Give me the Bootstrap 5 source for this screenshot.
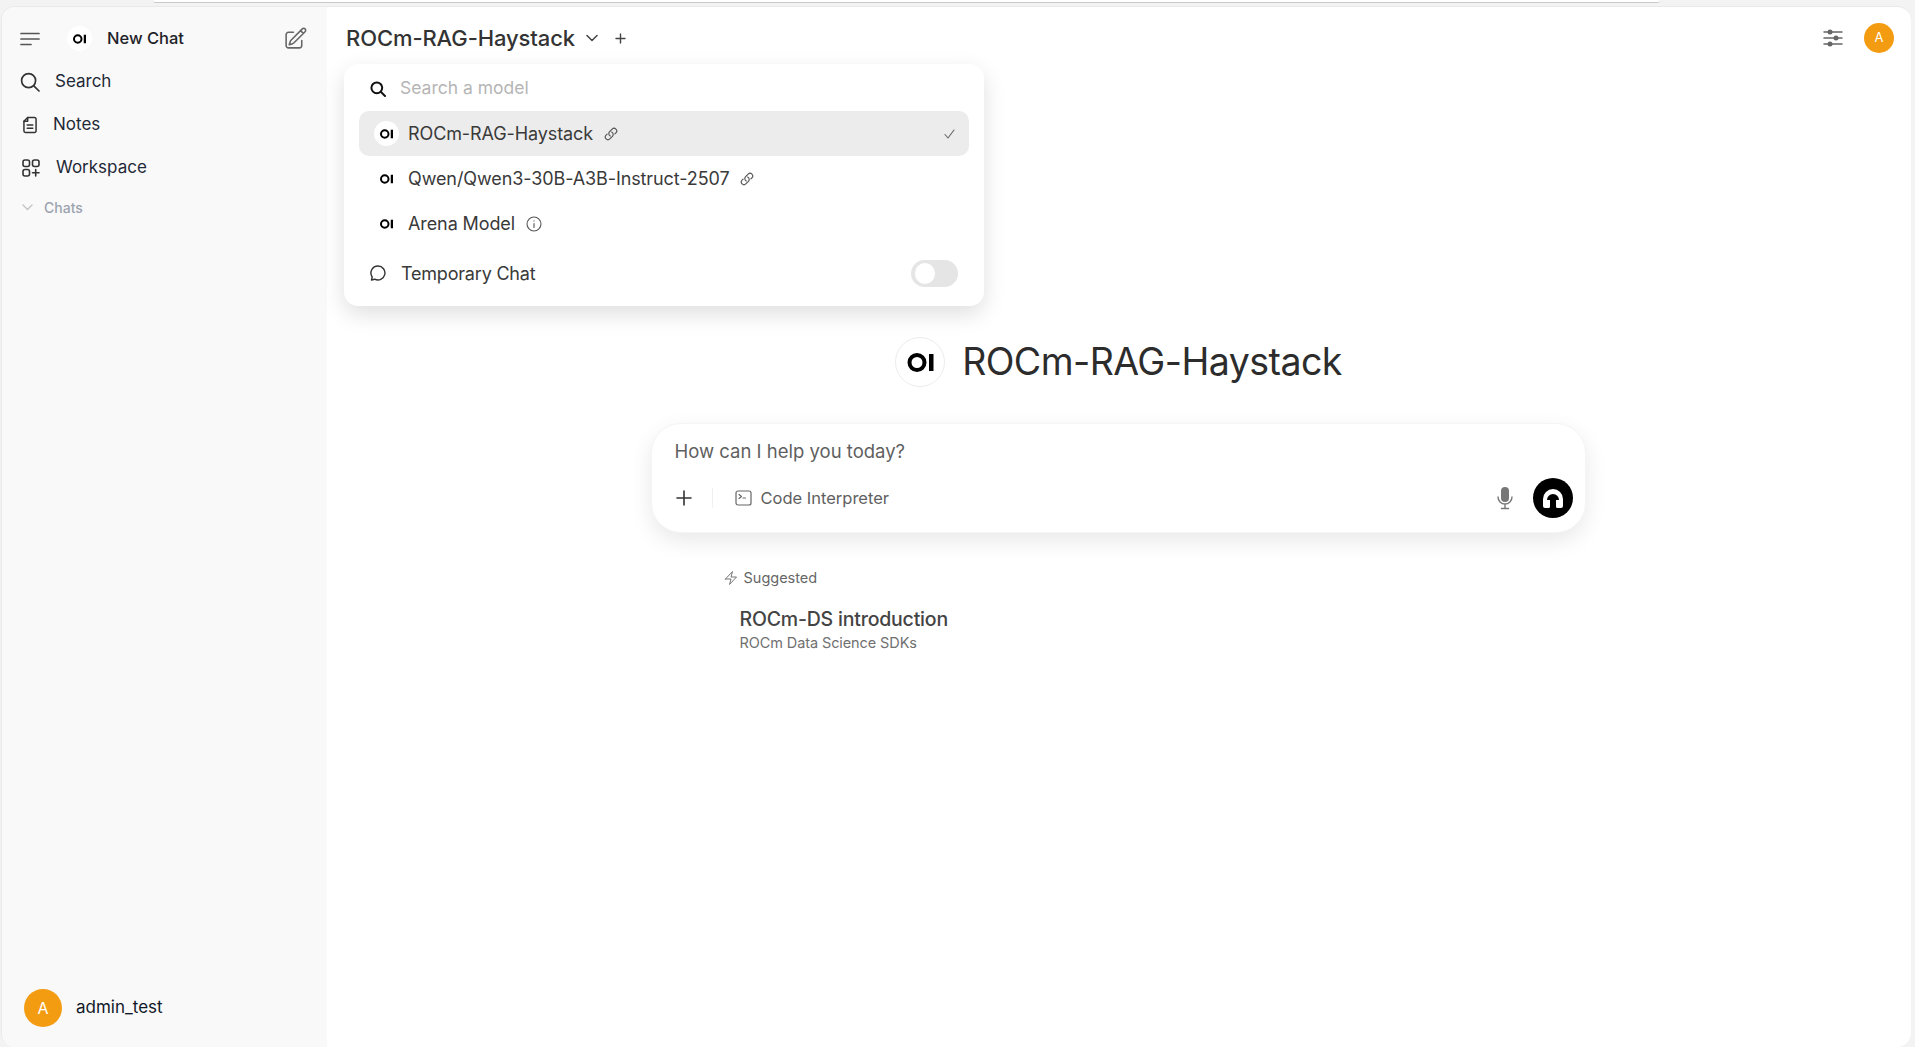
<!DOCTYPE html>
<html lang="en">
<head>
  <meta charset="UTF-8" />
  <meta name="viewport" content="width=device-width, initial-scale=1">
  <title>ROCm-RAG-Haystack</title>
  <link href="https://cdn.jsdelivr.net/npm/bootstrap@5.3.0/dist/css/bootstrap.min.css" rel="stylesheet" />
  <style>
    html, body { height: 100%; }
    body {
      font-family: "Inter", "Liberation Sans", sans-serif;
      background: #f3f3f3;
      color: #1f2328;
      overflow: hidden;
    }
    svg { display: block; flex-shrink: 0; }
    /* thin browser bar remnant above the window */
    .top-strip { height: 6px; }
    .top-strip-bar { margin: 0 255px 0 153px; height: 3px; background: #fff; border-bottom: 1.5px solid #c9c9c9; border-radius: 0 0 6px 6px; }
    .app-window { height: 1041px; margin: 0 4px 0 1px; border-radius: 14px; overflow: hidden; background: #fff; border: 1px solid #e9e9e9; border-bottom: 0; border-right: 0; }

    .side-panel { width: 325px; background: #f9f9f9; padding: 0 19px 0 18px; flex-shrink: 0; }
    .side-head { height: 53px; padding-top: 10px; }
    .side-row { height: 43px; font-size: 17px; color: #1f2937; }
    .side-label { margin-left: 15px; }
    .side-chats { font-size: 14px; color: #9ca3af; font-weight: 500; height: 36px; }
    .side-chats svg { margin-left: 2px; }
    .side-chats span { margin-left: 11px; }
    .icon-nudge { margin-left: 3px; }
    .icon-nudge-sm { margin-left: 2px; }
    .oi-chip { width: 25px; height: 25px; border-radius: 50%; background: #fff; }
    .head-chip { margin-left: 27px; }
    .new-chat { font-size: 16.5px; font-weight: 500; color: #1f2328; margin-left: 15px; }
    .ava { border-radius: 50%; background: #f39c12; color: #fff; }
    .ava-lg { width: 38px; height: 38px; font-size: 16px; }
    .ava-sm { width: 30px; height: 30px; font-size: 13px; }
    .user-row { padding: 0 0 20px 4px; font-size: 17px; color: #111827; gap: 14px; }

    .main-pane { position: relative; min-width: 0; }
    .main-head { height: 52px; padding: 10px 17px 0 19px; }
    .model-name { font-size: 22px; font-weight: 500; color: #333; letter-spacing: -0.1px; }
    .head-chevron { margin-left: 11px; }
    .head-plus { margin-left: 17px; }
    .head-ava { margin-left: 21px; }

    .model-menu { position: absolute; left: 17px; top: 57px; width: 640px; height: 242px; background: #fff; border-radius: 14px; box-shadow: 0 8px 22px rgba(0,0,0,.13); padding: 0 15px; }
    .menu-search { height: 47px; padding: 2px 0 0 11px; font-size: 17.5px; color: #b5b5b5; }
    .menu-search span { margin-left: 14px; }
    .menu-item { height: 45px; border-radius: 10px; padding: 0 14px; font-size: 18px; color: #3a3a3a; letter-spacing: -0.1px; }
    .menu-item.is-active { background: #ececec; }
    .menu-label { margin-left: 9px; }
    .menu-after { margin-left: 11px; }
    .menu-temp { height: 56px; padding: 0 11px 2px; font-size: 18px; color: #3a3a3a; letter-spacing: -0.2px; }
    .menu-temp span { margin-left: 15px; }
    .oi-list { margin-left: 1px; }
    .oi-list.is-plain { background: transparent; }
    .fake-switch { width: 47px; height: 27px; border-radius: 14px; background: #e5e5e5; padding: 3px 4px; }
    .fake-switch span { display: block; width: 20px; height: 21px; border-radius: 50%; background: #fff; margin: 0; }

    .center-col { padding: 278px 2px 0 0; }
    .hero { height: 50px; margin-left: 1px; gap: 17px; }
    .hero-logo { width: 50px; height: 50px; border-radius: 50%; border: 1px solid #ececec; background: #fff; }
    .hero-title { font-size: 37.5px; font-weight: 400; color: #2c2c2c; letter-spacing: -0.55px; }

    .chat-box { width: 935px; height: 110px; margin-top: 36px; border-radius: 30px; border: 1px solid #f5f5f5; background: #fff; box-shadow: 0 8px 22px rgba(0,0,0,.09); padding: 0 12px 0 23px; }
    .chat-hint { padding-top: 14px; height: 54px; font-size: 18.5px; color: #5f5f5f; }
    .chat-plus { margin-left: 1px; }
    .tool-sep { width: 1px; height: 20px; background: #f0f0f0; margin: 0 22px 0 20px; }
    .tool-label { font-size: 16.5px; color: #5f5f5f; margin-left: 9px; }
    .mic-gap { margin-right: 20px; }
    .voice-btn { width: 40px; height: 40px; border-radius: 50%; background: #000; }

    .suggest-wrap { width: 935px; padding: 35px 0 0 72px; }
    .suggest-label { font-size: 14.5px; color: #666; height: 20px; gap: 5px; }
    .suggest-title { margin: 19px 0 0 17px; font-size: 19.5px; font-weight: 500; color: #444; line-height: 25.5px; letter-spacing: -0.2px; }
    .suggest-sub { margin-left: 17px; font-size: 14.5px; color: #707070; line-height: 20px; letter-spacing: -0.1px; }
  </style>
</head>
<body>
  <!-- shared logo and chain icons -->
  <svg width="0" height="0" class="position-absolute">
    <symbol id="oi-logo" viewBox="0 0 26 19"><circle cx="9.5" cy="9.5" r="7.5" fill="none" stroke="#000" stroke-width="4"/><rect x="21.5" y="1" width="4.5" height="17" fill="#000"/></symbol>
    <symbol id="chain" viewBox="0 0 24 24"><path fill="none" stroke="#555" stroke-width="2" stroke-linecap="round" stroke-linejoin="round" d="M13.19 8.688a4.5 4.5 0 0 1 1.242 7.244l-4.5 4.5a4.5 4.5 0 0 1-6.364-6.364l1.757-1.757m13.35-.622 1.757-1.757a4.5 4.5 0 0 0-6.364-6.364l-4.5 4.5a4.5 4.5 0 0 0 1.242 7.244"/></symbol>
  </svg>

  <div class="top-strip"><div class="top-strip-bar"></div></div>

  <div class="app-window d-flex">
    <!-- Sidebar -->
    <aside class="side-panel d-flex flex-column">
      <div class="side-head d-flex align-items-center">
        <svg width="20" height="14" viewBox="0 0 20 14" fill="none" stroke="#555" stroke-width="1.7" stroke-linecap="round"><path d="M1 1.5h18M1 7h18M1 12.5h10"/></svg>
        <div class="oi-chip head-chip d-flex align-items-center justify-content-center">
          <svg width="13" height="10"><use href="#oi-logo"/></svg>
        </div>
        <span class="new-chat">New Chat</span>
        <svg class="ms-auto" width="25" height="25" viewBox="0 0 24 24" fill="none" stroke="#666" stroke-width="1.5" stroke-linecap="round" stroke-linejoin="round"><path d="m16.862 4.487 1.687-1.688a1.875 1.875 0 1 1 2.652 2.652L10.582 16.07a4.5 4.5 0 0 1-1.897 1.13L6 18l.8-2.685a4.5 4.5 0 0 1 1.13-1.897l8.932-8.931Zm0 0L19.5 7.125M18 14v4.75A2.25 2.25 0 0 1 15.75 21H5.25A2.25 2.25 0 0 1 3 18.75V8.25A2.25 2.25 0 0 1 5.25 6H10"/></svg>
      </div>
      <div class="side-row d-flex align-items-center">
        <svg width="20" height="20" viewBox="0 0 20 20" fill="none" stroke="#333" stroke-width="1.7" stroke-linecap="round"><circle cx="8.6" cy="8.6" r="7"/><path d="M13.8 13.8L19 19"/></svg>
        <span class="side-label">Search</span>
      </div>
      <div class="side-row d-flex align-items-center">
        <svg class="icon-nudge" width="14" height="18" viewBox="0 0 15 18" fill="none" stroke="#333" stroke-width="1.6" stroke-linejoin="round" stroke-linecap="round"><path d="M5 1h7.5A1.5 1.5 0 0 1 14 2.5v13a1.5 1.500 0 0 1-1.5 1.5h-10A1.5 1.5 0 0 1 1 15.5V5z"/><path d="M5 1v4H1M4.5 9h6M4.5 12.5h6"/></svg>
        <span class="ms-3">Notes</span>
      </div>
      <div class="side-row d-flex align-items-center">
        <svg class="icon-nudge-sm" width="18" height="18" viewBox="0 0 18 18" fill="none" stroke="#333" stroke-width="1.6" stroke-linecap="round"><rect x="1" y="1" width="6.5" height="6.5" rx="2"/><rect x="10.5" y="1" width="6.5" height="6.5" rx="2"/><rect x="1" y="10.5" width="6.5" height="6.5" rx="2"/><path d="M13.7 10.5v6.5M10.5 13.7H17"/></svg>
        <span class="ms-3">Workspace</span>
      </div>
      <div class="side-chats d-flex align-items-center">
        <svg width="11" height="7" viewBox="0 0 11 7" fill="none" stroke="#c4c4c4" stroke-width="1.4" stroke-linecap="round" stroke-linejoin="round"><path d="M1 1l4.5 4.5L10 1"/></svg>
        <span>Chats</span>
      </div>
      <div class="user-row mt-auto d-flex align-items-center">
        <div class="ava ava-lg d-flex align-items-center justify-content-center">A</div>
        <span>admin_test</span>
      </div>
    </aside>

    <!-- Main -->
    <main class="main-pane flex-grow-1 d-flex flex-column">
      <div class="main-head d-flex align-items-center">
        <span class="model-name">ROCm-RAG-Haystack</span>
        <svg class="head-chevron" width="12" height="8" viewBox="0 0 12 8" fill="none" stroke="#444" stroke-width="1.5" stroke-linecap="round" stroke-linejoin="round"><path d="M1 1.5l5 5 5-5"/></svg>
        <svg class="head-plus" width="11" height="11" viewBox="0 0 11 11" fill="none" stroke="#444" stroke-width="1.4" stroke-linecap="round"><path d="M5.5 1v9M1 5.5h9"/></svg>
        <svg class="ms-auto" width="20" height="18" viewBox="0 0 20 18" fill="#666" stroke="#666" stroke-width="1.5" stroke-linecap="round"><path d="M1 3h18M1 9h18M1 15h18" fill="none"/><circle cx="7" cy="3" r="2.5" stroke="none"/><circle cx="13" cy="9" r="2.5" stroke="none"/><circle cx="7" cy="15" r="2.5" stroke="none"/></svg>
        <div class="ava ava-sm head-ava d-flex align-items-center justify-content-center">A</div>
      </div>

      <!-- Model dropdown -->
      <div class="model-menu d-flex flex-column">
        <div class="menu-search d-flex align-items-center">
          <svg width="16" height="16" viewBox="0 0 16 16" fill="none" stroke="#111" stroke-width="2" stroke-linecap="round"><circle cx="6.8" cy="6.8" r="5.4"/><path d="M11 11l4 4"/></svg>
          <span>Search a model</span>
        </div>
        <div class="menu-item is-active d-flex align-items-center">
          <div class="oi-chip oi-list d-flex align-items-center justify-content-center"><svg width="13" height="10"><use href="#oi-logo"/></svg></div>
          <span class="menu-label">ROCm-RAG-Haystack</span>
          <svg class="menu-after" width="14" height="14"><use href="#chain"/></svg>
          <svg class="ms-auto" width="11" height="10" viewBox="0 0 11 10" fill="none" stroke="#666" stroke-width="1.1" stroke-linecap="round" stroke-linejoin="round"><path d="M1 5.5L4 9l6-8"/></svg>
        </div>
        <div class="menu-item d-flex align-items-center">
          <div class="oi-chip oi-list is-plain d-flex align-items-center justify-content-center"><svg width="13" height="10"><use href="#oi-logo"/></svg></div>
          <span class="menu-label">Qwen/Qwen3-30B-A3B-Instruct-2507</span>
          <svg class="menu-after" width="14" height="14"><use href="#chain"/></svg>
        </div>
        <div class="menu-item d-flex align-items-center">
          <div class="oi-chip oi-list is-plain d-flex align-items-center justify-content-center"><svg width="13" height="10"><use href="#oi-logo"/></svg></div>
          <span class="menu-label">Arena Model</span>
          <svg class="menu-after" width="16" height="16" viewBox="0 0 16 16" fill="none" stroke="#555" stroke-width="1.1" stroke-linecap="round"><circle cx="8" cy="8" r="7"/><path d="M8 7.5v4M8 4.8v.2"/></svg>
        </div>
        <div class="menu-temp d-flex align-items-center">
          <svg width="16" height="16" viewBox="0 0 16 16" fill="none" stroke="#333" stroke-width="1.4" stroke-linejoin="round"><path d="M8 1a7 7 0 1 1-3.3 13.2L1.5 15l.7-3A7 7 0 0 1 8 1z"/></svg>
          <span>Temporary Chat</span>
          <div class="fake-switch ms-auto"><span></span></div>
        </div>
      </div>

      <!-- Centre block -->
      <div class="center-col d-flex flex-column align-items-center">
        <div class="hero d-flex align-items-center">
          <div class="hero-logo d-flex align-items-center justify-content-center">
            <svg width="27" height="19"><use href="#oi-logo"/></svg>
          </div>
          <div class="hero-title">ROCm-RAG-Haystack</div>
        </div>
        <div class="chat-box">
          <div class="chat-hint">How can I help you today?</div>
          <div class="d-flex align-items-center">
            <svg class="chat-plus" width="16" height="16" viewBox="0 0 16 16" fill="none" stroke="#333" stroke-width="1.6" stroke-linecap="round"><path d="M8 1v14M1 8h14"/></svg>
            <div class="tool-sep"></div>
            <svg width="17" height="16" viewBox="0 0 17 16" fill="none" stroke="#666" stroke-width="1.2" stroke-linecap="round" stroke-linejoin="round"><rect x="1" y="1" width="15" height="14" rx="2"/><path d="M4 4.5l2.5 2-2.5 2M8 8h2.5"/></svg>
            <span class="tool-label">Code Interpreter</span>
            <svg class="ms-auto mic-gap" width="16" height="24" viewBox="0 0 16 24" fill="none" stroke="#777" stroke-width="1.4" stroke-linecap="round"><rect x="4" y="1" width="8" height="15" rx="4" fill="#777" stroke="none"/><path d="M1 11a7 7 0 0 0 14 0M8 18v4M4.5 22.5h7"/></svg>
            <div class="voice-btn d-flex align-items-center justify-content-center">
              <svg width="20" height="19" viewBox="0 0 20 19"><path d="M0 17V10a10 10 0 0 1 20 0v7a2 2 0 0 1-2 2h-3.5a1.5 1.5 0 0 1-1.5-1.5V11H7v6.5A1.5 1.5 0 0 1 5.5 19H2a2 2 0 0 1-2-2z" fill="#fff"/><path d="M4 11a6 6 0 0 1 12 0z" fill="#000"/></svg>
            </div>
          </div>
        </div>
        <div class="suggest-wrap">
          <div class="suggest-label d-flex align-items-center">
            <svg width="16" height="16" viewBox="0 0 24 24" fill="none" stroke="#777" stroke-width="1.5" stroke-linejoin="round" stroke-linecap="round"><path d="m3.75 13.5 10.5-11.25L12 10.5h8.25L9.75 21.75 12 13.5H3.75Z"/></svg>
            <span>Suggested</span>
          </div>
          <div class="suggest-title">ROCm-DS introduction</div>
          <div class="suggest-sub">ROCm Data Science SDKs</div>
        </div>
      </div>
    </main>
  </div>
</body>
</html>
